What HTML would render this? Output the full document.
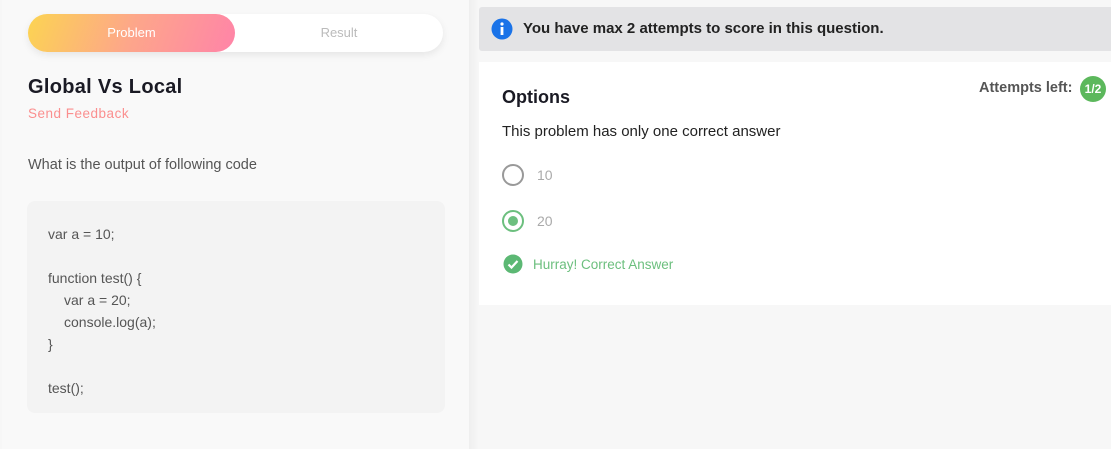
<!DOCTYPE html>
<html><head><style>
*{margin:0;padding:0;box-sizing:border-box}
body{width:1111px;height:449px;background:#f7f7f7;font-family:"Liberation Sans",sans-serif;position:relative;overflow:hidden}
.left{position:absolute;left:2px;top:0;width:467px;height:449px;background:#f9f9f9}
.sep{position:absolute;left:469px;top:0;width:9px;height:449px;background:linear-gradient(90deg,#efefef,#f6f6f6)}
.toggle{position:absolute;left:28px;top:14px;width:415px;height:38px;background:#fff;border-radius:19px;box-shadow:0 3px 8px rgba(0,0,0,.08)}
.prob{position:absolute;left:0;top:0;width:207px;height:38px;border-radius:19px;background:linear-gradient(110deg,#fcd452,#fda68a 50%,#ff84a8);color:#fff;font-size:13px;text-align:center;line-height:38px}
.res{position:absolute;left:207px;top:0;width:208px;text-align:center;line-height:38px;color:#bbb;font-size:13px}
.t{position:absolute;white-space:nowrap}
.code{position:absolute;left:27px;top:201px;width:418px;height:212px;background:#f3f3f3;border-radius:8px}
.code div{position:absolute;left:21px;font-size:14px;color:#555}
.banner{position:absolute;left:479px;top:7px;width:632px;height:44px;background:#e3e3e5;border-radius:3px 0 0 3px}
.card{position:absolute;left:479px;top:62px;width:632px;height:243px;background:#fff}
</style></head><body>
<div class="left"></div><div class="sep"></div>
<div class="toggle"><div class="prob">Problem</div><div class="res">Result</div></div>
<div class="t" style="left:28px;top:76px;font-size:20px;font-weight:bold;color:#1a1a24;letter-spacing:.3px">Global Vs Local</div>
<div class="t" style="left:28px;top:106px;font-size:13.5px;color:#fb8f8f;letter-spacing:.5px">Send Feedback</div>
<div class="t" style="left:28px;top:157px;font-size:14.5px;color:#555">What is the output of following code</div>
<div class="code">
<div style="top:25px">var a = 10;</div>
<div style="top:69px">function test() {</div>
<div style="top:91px;left:37px">var a = 20;</div>
<div style="top:113px;left:37px">console.log(a);</div>
<div style="top:135px">}</div>
<div style="top:179px">test();</div>
</div>
<div class="banner"></div>
<svg style="position:absolute;left:491px;top:18px" width="22" height="22"><circle cx="11" cy="11" r="10.5" fill="#1a73e8"/><rect x="9.6" y="9" width="2.8" height="8" fill="#fff"/><circle cx="11" cy="6" r="1.6" fill="#fff"/></svg>
<div class="t" style="left:523px;top:20px;font-size:15px;font-weight:bold;color:#222">You have max 2 attempts to score in this question.</div>
<div class="card"></div>
<div class="t" style="left:502px;top:87px;font-size:18px;font-weight:bold;color:#1a1a24">Options</div>
<div class="t" style="left:979px;top:80px;font-size:14.5px;font-weight:bold;color:#555">Attempts left:</div>
<div class="t" style="left:1080px;top:76px;width:26px;height:26px;border-radius:13px;background:#5cb85c;color:#fff;font-size:12px;font-weight:bold;text-align:center;line-height:26px">1/2</div>
<div class="t" style="left:502px;top:123px;font-size:15px;color:#222">This problem has only one correct answer</div>
<div class="t" style="left:502px;top:164px;width:22px;height:22px;border-radius:50%;border:2px solid #999"></div>
<div class="t" style="left:537px;top:167px;font-size:14px;color:#aaa">10</div>
<div class="t" style="left:502px;top:210px;width:22px;height:22px;border-radius:50%;border:2px solid #6cbf7e"><div style="position:absolute;left:4px;top:4px;width:10px;height:10px;border-radius:50%;background:#6cbf7e"></div></div>
<div class="t" style="left:537px;top:213px;font-size:14px;color:#aaa">20</div>
<svg style="position:absolute;left:503px;top:254px" width="20" height="20"><circle cx="10" cy="10" r="9.5" fill="#5cb874"/><path d="M5.5 10.5l3 3 6-6.5" stroke="#fff" stroke-width="2.2" fill="none"/></svg>
<div class="t" style="left:533px;top:257px;font-size:13.5px;color:#6cbf7e">Hurray! Correct Answer</div>
</body></html>
